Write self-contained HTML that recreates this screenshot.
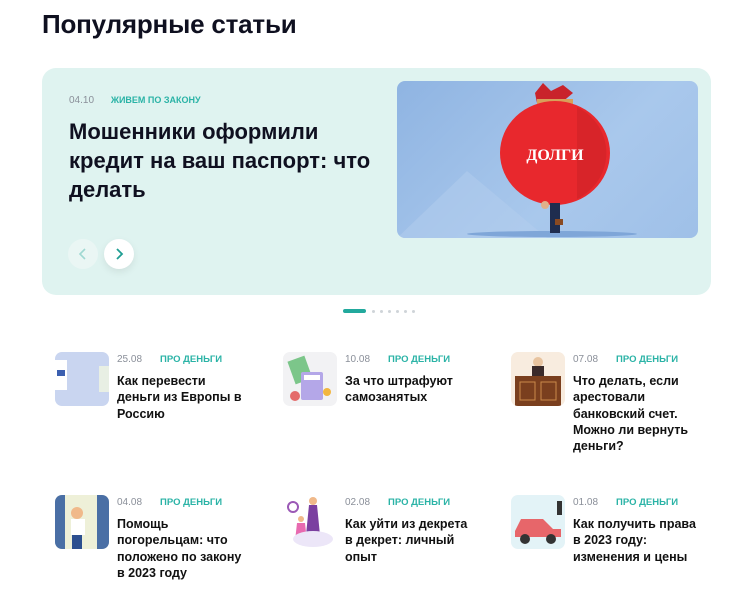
<!DOCTYPE html>
<html><head><meta charset="utf-8"><style>
*{margin:0;padding:0;box-sizing:border-box}
body{width:751px;height:604px;background:#fff;font-family:"Liberation Sans","DejaVu Sans",sans-serif;color:#111827;position:relative;overflow:hidden}
h1{position:absolute;left:42px;top:9px;font-size:26px;font-weight:bold;color:#0f1020;letter-spacing:-0.2px}
.card{position:absolute;left:42px;top:68px;width:669px;height:227px;background:#dff3f0;border-radius:14px}
.meta{position:absolute;font-size:10px;color:#8a8f99}
.cat{color:#2ab3a6;font-weight:bold;text-transform:uppercase}
.big{position:absolute;left:27px;top:49px;font-size:22px;line-height:29px;font-weight:bold;color:#0f1020;width:330px}
.btn{position:absolute;top:171px;width:30px;height:30px;border-radius:50%;display:flex;align-items:center;justify-content:center}
.img{position:absolute;left:355px;top:13px;width:301px;height:157px;border-radius:8px;background:linear-gradient(135deg,#8fb4e2,#a9c8ec 60%,#9fc0e8);overflow:hidden}
.dots{position:absolute;top:309px;left:343px;height:4px}
.item{position:absolute;width:200px}
.thumb{position:absolute;left:0;top:0;width:54px;height:54px;border-radius:7px;overflow:hidden}
.it{position:absolute;left:62px;top:2px;width:130px}
.it .d{font-size:10px;color:#8a8f99;height:13px}
.it .d b{color:#2ab3a6;font-weight:bold;margin-left:18px;font-size:9.5px}
.it .t{font-size:12.5px;font-weight:bold;line-height:16.3px;margin-top:6px;color:#111}
</style></head><body>
<h1>Популярные статьи</h1>
<div class="card">
 <div class="meta" style="left:27px;top:27px">04.10 <span class="cat" style="margin-left:14px;font-size:9px">Живем по закону</span></div>
 <div class="big">Мошенники оформили кредит на ваш паспорт: что делать</div>
 <div class="btn" style="left:26px;background:#eaf6f4"><svg width="10" height="12" viewBox="0 0 10 12"><path d="M7 1L2 6l5 5" stroke="#9fd8d2" stroke-width="1.6" fill="none"/></svg></div>
 <div class="btn" style="left:62px;background:#fff;box-shadow:0 3px 8px rgba(0,0,0,.08)"><svg width="10" height="12" viewBox="0 0 10 12"><path d="M3 1l5 5-5 5" stroke="#1f9e93" stroke-width="1.8" fill="none"/></svg></div>
 <div class="img"><svg width="301" height="157" viewBox="0 0 301 157">
  <polygon points="0,157 70,90 150,157" fill="#b3cdee" opacity=".5"/>
  <ellipse cx="155" cy="153" rx="85" ry="3" fill="#7fa6d8"/>
  <path d="M138 12l8-10 8 8 12-6 10 8-12 10h-24z" fill="#c9232b"/>
  <rect x="140" y="18" width="36" height="6" fill="#d8a05a"/>
  <ellipse cx="158" cy="72" rx="55" ry="52" fill="#e8282d"/>
  <path d="M180 26a55 52 0 0 1 0 92" fill="#c81f25" opacity=".5"/>
  <text x="158" y="79" font-family="Liberation Serif,serif" font-weight="bold" font-size="16" fill="#fff" text-anchor="middle">ДОЛГИ</text>
  <rect x="153" y="122" width="10" height="30" fill="#1f2d4f"/>
  <circle cx="148" cy="124" r="4" fill="#e0b08a"/>
  <rect x="158" y="138" width="8" height="6" fill="#8a4a22"/>
 </svg></div>
</div>
<div class="dots"><div style="position:absolute;left:0;top:0;width:23px;height:4px;border-radius:2px;background:#22a99d"></div>
<div style="position:absolute;left:29px;top:1px;width:3px;height:3px;border-radius:50%;background:#cfd4d8;box-shadow:8px 0 #cfd4d8,16px 0 #cfd4d8,24px 0 #cfd4d8,32px 0 #cfd4d8,40px 0 #cfd4d8"></div></div>

<div class="item" style="left:55px;top:352px"><div class="thumb" style="background:#c9d5f0"><svg width="54" height="54"><rect x="0" y="8" width="12" height="30" fill="#fff"/><rect x="2" y="18" width="8" height="6" fill="#3b5fb0"/><rect x="44" y="14" width="10" height="26" fill="#e8efe4"/></svg></div><div class="it"><div class="d">25.08<b>ПРО ДЕНЬГИ</b></div><div class="t">Как перевести деньги из Европы в Россию</div></div></div>
<div class="item" style="left:283px;top:352px"><div class="thumb" style="background:#f2f2f4"><svg width="54" height="54"><rect x="8" y="6" width="18" height="24" fill="#7cc68a" transform="rotate(-20 17 18)"/><rect x="18" y="20" width="22" height="28" rx="2" fill="#b4a7e8"/><rect x="21" y="23" width="16" height="5" fill="#fff"/><circle cx="12" cy="44" r="5" fill="#e46b6b"/><circle cx="44" cy="40" r="4" fill="#f2b640"/></svg></div><div class="it"><div class="d">10.08<b>ПРО ДЕНЬГИ</b></div><div class="t">За что штрафуют самозанятых</div></div></div>
<div class="item" style="left:511px;top:352px"><div class="thumb" style="background:#f8ecdf"><svg width="54" height="54"><circle cx="27" cy="10" r="5" fill="#e8c4a0"/><rect x="21" y="14" width="12" height="12" fill="#3a2a2a"/><rect x="4" y="24" width="46" height="30" fill="#7a3f1e"/><rect x="9" y="30" width="15" height="18" fill="none" stroke="#c98a4a"/><rect x="30" y="30" width="15" height="18" fill="none" stroke="#c98a4a"/></svg></div><div class="it"><div class="d">07.08<b>ПРО ДЕНЬГИ</b></div><div class="t">Что делать, если арестовали банковский счет. Можно ли вернуть деньги?</div></div></div>

<div class="item" style="left:55px;top:495px"><div class="thumb" style="background:#eef0d8"><svg width="54" height="54"><rect x="0" y="0" width="10" height="54" fill="#4a6fa5"/><rect x="42" y="0" width="12" height="54" fill="#4a6fa5"/><circle cx="22" cy="18" r="6" fill="#f0b98a"/><rect x="16" y="24" width="14" height="16" fill="#fff"/><rect x="17" y="40" width="10" height="14" fill="#2c4f8f"/></svg></div><div class="it"><div class="d">04.08<b>ПРО ДЕНЬГИ</b></div><div class="t">Помощь погорельцам: что положено по закону в 2023 году</div></div></div>
<div class="item" style="left:283px;top:495px"><div class="thumb" style="background:#fff"><svg width="54" height="54"><circle cx="10" cy="12" r="5" fill="none" stroke="#9b59b6" stroke-width="2"/><circle cx="30" cy="6" r="4" fill="#f0b98a"/><path d="M26 10h8l4 40h-16z" fill="#7b3fa0"/><circle cx="18" cy="24" r="3" fill="#f0b98a"/><path d="M14 28h8l2 18h-12z" fill="#e86ab0"/><ellipse cx="30" cy="44" rx="20" ry="8" fill="#ece6f8"/></svg></div><div class="it"><div class="d">02.08<b>ПРО ДЕНЬГИ</b></div><div class="t">Как уйти из декрета в декрет: личный опыт</div></div></div>
<div class="item" style="left:511px;top:495px"><div class="thumb" style="background:#e3f3f7"><svg width="54" height="54"><path d="M4 36l6-12h22l10 10h8v8H4z" fill="#e7666a"/><circle cx="14" cy="44" r="5" fill="#333"/><circle cx="40" cy="44" r="5" fill="#333"/><rect x="46" y="6" width="5" height="14" fill="#333"/></svg></div><div class="it"><div class="d">01.08<b>ПРО ДЕНЬГИ</b></div><div class="t">Как получить права в 2023 году: изменения и цены</div></div></div>
</body></html>
